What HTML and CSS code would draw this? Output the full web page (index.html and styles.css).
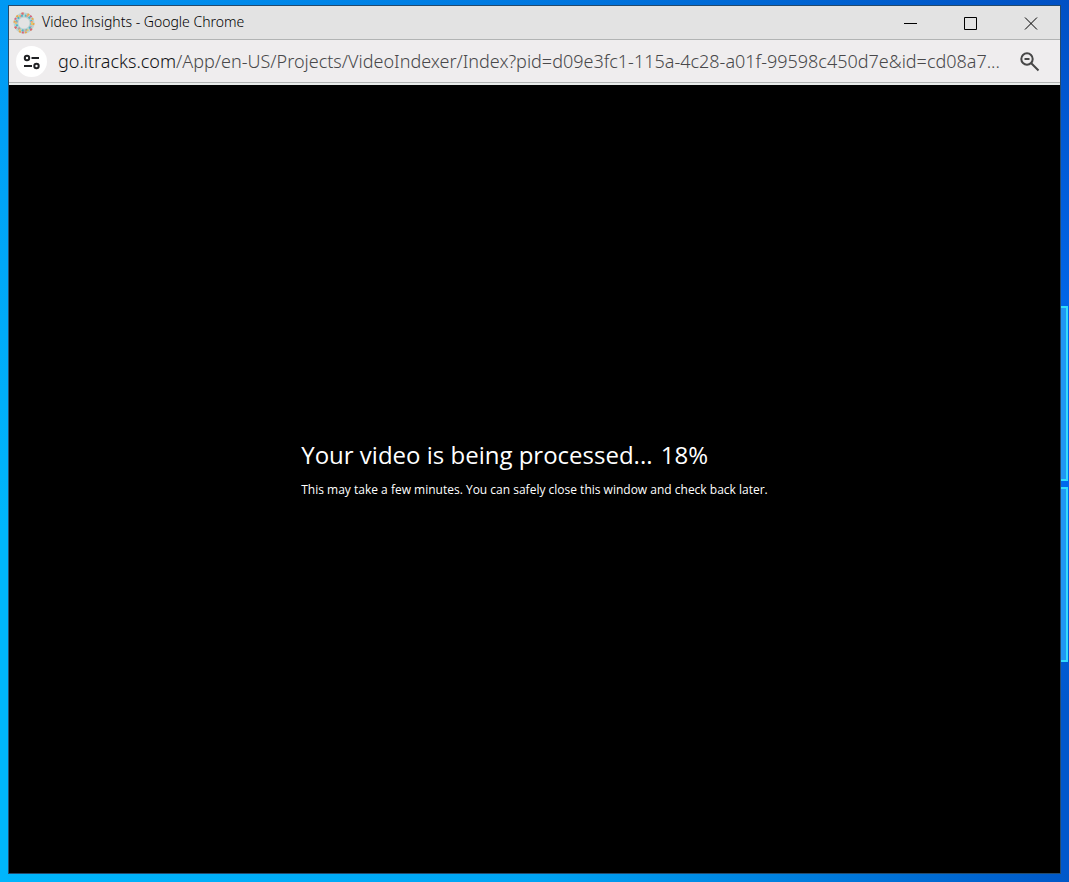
FILE: index.html
```html
<!DOCTYPE html>
<html lang="en">
    <head>
        <meta charset="utf-8">
        <title>Video Insights</title>
        <meta name="viewport" content="width=device-width">

        <link rel="stylesheet" href="styles.css">
    </head>
	<body>
		<!-- desktop wallpaper window panes -->
		<div class="pane pane-top"></div>
		<div class="pane pane-bottom"></div>

		<div class="window">
			<header class="titlebar">
				<svg class="favicon" viewBox="0 0 22 22" fill="none">
					<circle cx="11" cy="11" r="8" stroke="#b9d3d3" stroke-width="5"/>
					<circle cx="11" cy="11" r="9.5" stroke="#eba64a" stroke-width="2" stroke-dasharray="2 4"/>
					<circle cx="11" cy="11" r="9.5" stroke="#d9607c" stroke-width="2" stroke-dasharray="2 7" stroke-dashoffset="3"/>
					<circle cx="11" cy="11" r="7.5" stroke="#4fb5c6" stroke-width="2" stroke-dasharray="2 2"/>
					<circle cx="11" cy="11" r="8" stroke="#e9c46a" stroke-width="2" stroke-dasharray="2 6"/>
					<circle cx="11" cy="11" r="7.5" stroke="#e58a96" stroke-width="2" stroke-dasharray="1 6" stroke-dashoffset="4"/>
				</svg>
				<span class="title">Video Insights - Google Chrome</span>
				<div class="controls">
					<button type="button" aria-label="Minimize">
						<svg viewBox="0 0 14 14"><path d="M0 7.5h13"/></svg>
					</button>
					<button type="button" aria-label="Maximize">
						<svg viewBox="0 0 14 14"><path d="M.5 1.5h12v12H.5z"/></svg>
					</button>
					<button type="button" aria-label="Close">
						<svg viewBox="0 0 14 14"><path d="M1 1.500l12 12M13 1.500l-12 12"/></svg>
					</button>
				</div>
			</header>

			<div class="toolbar">
				<button type="button" class="site-info" aria-label="View site information">
					<svg viewBox="0 0 18 16"><circle cx="4" cy="4" r="2.2"/><path d="M8.5 4H16M1 12h8"/><circle cx="13.5" cy="12" r="2.2"/></svg>
				</button>
				<div class="url"><span class="host">go.itracks.com</span>/App/en-US/Projects/VideoIndexer/Index?pid=d09e3fc1-115a-4c28-a01f-99598c450d7e&amp;id=cd08a7...</div>
				<button type="button" class="zoom" aria-label="Zoom">
					<svg viewBox="0 0 20 20"><circle cx="7" cy="7" r="5.7"/><path d="M4.500 7h5M11 11l7.500 7.500"/></svg>
				</button>
			</div>

			<main class="content">
				<div class="status">
					<h1>Your video is being processed... <span class="percent">18%</span></h1>
					<p>This may take a few minutes. You can safely close this window and check back later.</p>
				</div>
			</main>
		</div>
	</body>
</html>
```
FILE: styles.css
```css
* {
    box-sizing: border-box;
}

html, body {
    height: 100%;
    margin: 0;
}

body {
    display: flex;
    padding: 5px 8px 8px;
    position: relative;
    overflow: hidden;
    font-family: "Open Sans", "Noto Sans", sans-serif;
    background:
        linear-gradient(to right, #00b6fc, #00a4f4 50%, #0058c8) bottom / 100% 8px no-repeat,
        linear-gradient(to right, #0099f4, #0078e0 50%, #0050c4) top / 100% 5px no-repeat,
        linear-gradient(to bottom, #0050c4, #0066e8 35%, #0068ec 55%, #0058cc 80%) right / 9px 100% no-repeat,
        linear-gradient(to bottom, #0098f4, #00b6fc 60%);
}

.window {
    flex: 1;
    min-width: 0;
    display: flex;
    flex-direction: column;
    border: 1px solid #244a6c;
    position: relative;
}

/* wallpaper panes that show beside the window */
.pane {
    position: absolute;
    right: 1px;
    width: 60px;
    background: #2196f3;
    border: 2px solid #32dcfc;
}

.pane-top {
    top: 306px;
    height: 175px;
}

.pane-bottom {
    top: 487px;
    height: 175px;
}

button {
    display: flex;
    align-items: center;
    justify-content: center;
    padding: 0;
    border: 0;
    background: none;
    cursor: pointer;
}

svg {
    display: block;
}

.titlebar {
    flex: none;
    display: flex;
    align-items: center;
    height: 34px;
    padding-left: 4px;
    background: #e3e3e3;
    border-bottom: 1px solid #b2b4b4;
}

.favicon {
    width: 22px;
    height: 22px;
    margin-right: 7px;
}

.title {
    flex: 1;
    padding-bottom: 2px;
    font-family: "Noto Sans", "Open Sans", sans-serif;
    font-size: 14px;
    font-weight: 300;
    color: #000;
}

.controls {
    display: flex;
    align-self: stretch;
}

.controls button {
    width: 60px;
    padding-left: 2px;
}

.controls svg {
    width: 14px;
    height: 14px;
    fill: none;
    stroke: #000;
}

.toolbar {
    flex: none;
    display: flex;
    align-items: center;
    height: 45px;
    padding: 0 20px 0 7px;
    background: #efedee;
    border-bottom: 2px solid #e9eceb;
    box-shadow: inset 0 -1px #b2b4b4;
}

.site-info {
    width: 31px;
    height: 31px;
    border-radius: 50%;
    background: #fff;
}

.site-info svg {
    width: 18px;
    height: 16px;
    fill: none;
    stroke: #202124;
    stroke-width: 2;
}

.url {
    flex: 1;
    min-width: 0;
    margin-left: 11px;
    padding-bottom: 1px;
    font-family: "Noto Sans", "Open Sans", sans-serif;
    font-size: 18px;
    font-weight: 300;
    white-space: nowrap;
    color: #48484a;
}

.host {
    color: #101114;
}

.zoom {
    width: 20px;
    height: 20px;
}

.zoom svg {
    width: 20px;
    height: 20px;
    fill: none;
    stroke: #474747;
    stroke-width: 2;
}

.content {
    flex: 1;
    display: flex;
    align-items: center;
    justify-content: center;
    background: #000;
    color: #fff;
}

.status {
    padding-bottom: 20px;
}

.status h1 {
    margin: 0;
    font-size: 24px;
    font-weight: 400;
    line-height: 34px;
}

.percent {
    margin-left: 2px;
}

.status p {
    margin: 8px 0 0;
    font-size: 12px;
    line-height: 20px;
}
```
